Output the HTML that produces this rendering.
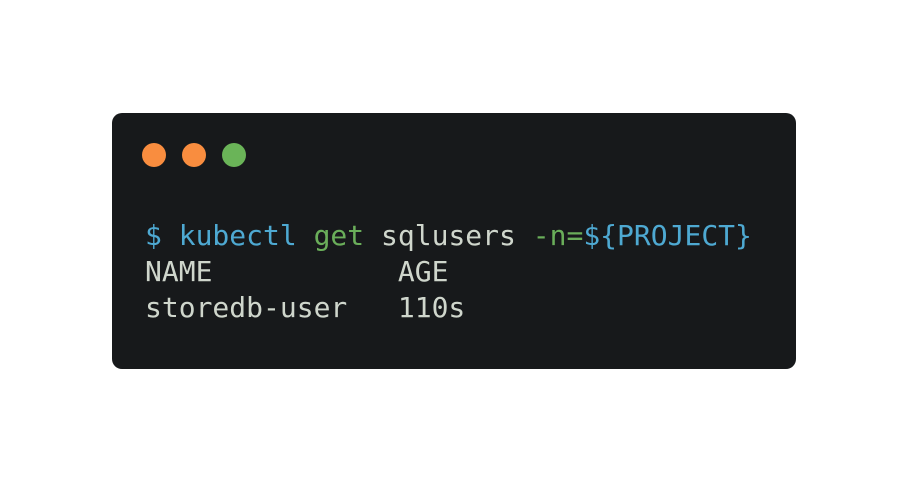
<!DOCTYPE html>
<html><head><style>
html,body{margin:0;padding:0;background:#fff;width:908px;height:482px;overflow:hidden}
.card{position:absolute;left:112px;top:113px;width:684px;height:256px;background:#17191b;border-radius:10px}
.dot{position:absolute;top:143px;width:24px;height:24px;border-radius:50%}
pre{position:absolute;left:145px;top:218px;margin:0;font-family:"DejaVu Sans Mono","Liberation Mono",monospace;font-size:28px;line-height:36px;color:#cfd6cc}
.b{color:#4ea9d2}.g{color:#6aae5a}
</style></head><body>
<div class="card"></div>
<div class="dot" style="left:142px;background:#f98d3f"></div>
<div class="dot" style="left:182px;background:#f98d3f"></div>
<div class="dot" style="left:222px;background:#6ab458"></div>
<pre><span class="b">$ kubectl</span> <span class="g">get</span> sqlusers <span class="g">-n=</span><span class="b">${PROJECT}</span>
NAME           AGE
storedb-user   110s</pre>
</body></html>
